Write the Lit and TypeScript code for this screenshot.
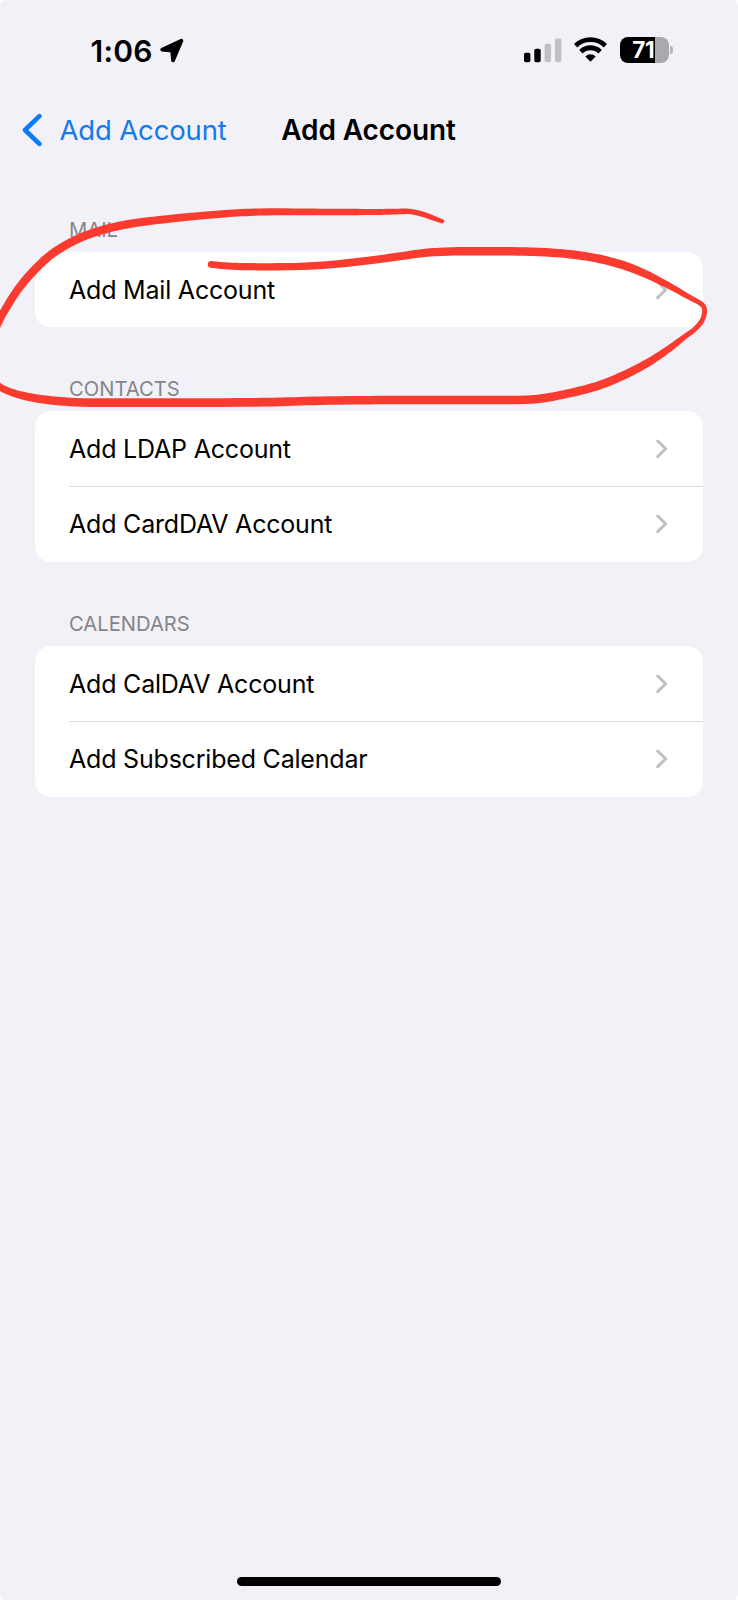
import { LitElement, html, css, svg } from "lit";
import { customElement, property } from "lit/decorators.js";

type InkPoint = [x: number, y: number, width: number];

/** Builds the filled outline of a pen stroke whose width varies along its length. */
function inkOutline(points: InkPoint[]): string {
  const samples: InkPoint[] = [];
  const steps = 8;
  for (let i = 0; i < points.length - 1; i++) {
    const p0 = points[Math.max(0, i - 1)];
    const p1 = points[i];
    const p2 = points[i + 1];
    const p3 = points[Math.min(points.length - 1, i + 2)];
    // Centripetal knots keep unevenly spaced points from looping.
    const knot = (a: InkPoint, b: InkPoint) =>
      Math.max(0.001, Math.sqrt(Math.hypot(b[0] - a[0], b[1] - a[1])));
    const d1 = knot(p0, p1), d2 = knot(p1, p2), d3 = knot(p2, p3);
    const first = i === 0, last = i === points.length - 2;
    for (let s = 0; s < steps; s++) {
      const t = s / steps;
      const at = (k: 0 | 1) => {
        const m1 = first ? p2[k] - p1[k]
          : d2 * ((p1[k] - p0[k]) / d1 - (p2[k] - p0[k]) / (d1 + d2) + (p2[k] - p1[k]) / d2);
        const m2 = last ? p2[k] - p1[k]
          : d2 * ((p2[k] - p1[k]) / d2 - (p3[k] - p1[k]) / (d2 + d3) + (p3[k] - p2[k]) / d3);
        const t2 = t * t, t3 = t2 * t;
        return (2 * t3 - 3 * t2 + 1) * p1[k] + (t3 - 2 * t2 + t) * m1 +
          (-2 * t3 + 3 * t2) * p2[k] + (t3 - t2) * m2;
      };
      samples.push([at(0), at(1), p1[2] + (p2[2] - p1[2]) * t]);
    }
  }
  samples.push(points[points.length - 1]);
  const left: string[] = [];
  const right: string[] = [];
  samples.forEach((p, i) => {
    const a = samples[Math.max(0, i - 1)];
    const b = samples[Math.min(samples.length - 1, i + 1)];
    const len = Math.hypot(b[0] - a[0], b[1] - a[1]) || 1;
    const nx = (-(b[1] - a[1]) / len) * (p[2] / 2);
    const ny = ((b[0] - a[0]) / len) * (p[2] / 2);
    left.push(`${(p[0] + nx).toFixed(2)} ${(p[1] + ny).toFixed(2)}`);
    right.push(`${(p[0] - nx).toFixed(2)} ${(p[1] - ny).toFixed(2)}`);
  });
  const r0 = points[0][2] / 2;
  const r1 = points[points.length - 1][2] / 2;
  return `M${left.join("L")}A${r1} ${r1} 0 0 0 ${right[right.length - 1]}L${right.reverse().join("L")}A${r0} ${r0} 0 0 0 ${left[0]}Z`;
}

const INK: InkPoint[] = [
  [442, 221.3, 4.4], [430, 216.8, 5.2], [419, 213.2, 5.4], [409, 211.4, 5.4], [403, 211.4, 5.6],
  [380, 211.9, 6], [330, 212, 6.6], [260, 212, 7.2], [225, 213.7, 7.4], [200, 215.8, 7.6],
  [165, 219.3, 7.8], [135, 223, 8.2], [110, 228, 8.4], [90, 234, 8.4], [70, 242.8, 8.4],
  [50, 255.5, 8.4], [33, 271.5, 8.4], [19, 288, 8.2], [8.5, 304, 8], [-1, 321, 7.8],
  [-9, 343, 7], [-12, 365, 7], [-8, 380, 7], [0, 387, 7], [12, 392.5, 7.4],
  [28, 396.8, 8], [48, 400, 8.4], [75, 402.2, 8.6], [150, 402.6, 8.7], [265, 402.2, 8.7],
  [320, 400.7, 8.6], [400, 400, 8.5], [500, 400, 8.5], [530, 399.6, 8.5], [545, 398, 8.5],
  [572, 392.6, 8.5], [599, 385.4, 8.5], [623, 375.6, 8.4], [647, 363.2, 8], [668, 349.5, 6.8],
  [684, 337.3, 5.4], [695, 329, 4.9], [702, 320.5, 4.9], [704.6, 312, 4.9], [703.8, 307, 4.9],
  [701, 303.8, 4.9], [690, 297.6, 5.2], [668, 285.2, 6.4], [645, 273.8, 7.8], [625, 265.8, 8.4],
  [600, 259, 8.5], [578, 255.2, 8.5], [555, 252.9, 8.5], [530, 251.7, 8.5], [480, 251.2, 8.5],
  [450, 251.5, 8.4], [424, 253, 8.2], [400, 256.3, 8], [370, 260.3, 7.8], [335, 264.2, 7.6],
  [300, 266.4, 7.4], [245, 266.6, 7.2], [225, 265.8, 7], [211, 264.4, 6.6],
];

@customElement("status-bar")
class StatusBar extends LitElement {
  static styles = css`
    :host { display: flex; justify-content: space-between; height: 90px; box-sizing: border-box; padding: 0 65px 0 90.5px; }
    .clock { display: flex; align-items: flex-start; padding-top: 32px; }
    .time { font-size: 30px; font-weight: 600; line-height: 38px; letter-spacing: 0.2px; width: 68.5px; white-space: nowrap; }
    .arrow { margin-top: 6px; }
    .indicators { display: flex; align-items: flex-start; padding-top: 36.5px; }
    .wifi { margin: 0 13px 0 12px; }
    .battery { display: flex; align-items: center; }
    .cell { display: grid; place-items: center; width: 48.5px; height: 26px; border-radius: 8px; background: linear-gradient(90deg, #000 34.6px, #a9a9ae 34.6px); color: #fff; font-size: 22.5px; font-weight: 700; letter-spacing: -0.5px; line-height: 26px; }
    .level { padding-right: 2px; }
    .nub { width: 3px; height: 8px; margin-left: 1.5px; border-radius: 0 4px 4px 0; background: #b3b3b8; }
  `;
  render() {
    return html`
      <div class="clock">
        <span class="time">1:06</span>
        <svg class="arrow" width="26" height="26" viewBox="0 0 26 26">
          <path d="M22.4 2.7 3.2 11.7 13.2 12.5 14 22.4Z" stroke="#000" stroke-width="3.8" stroke-linejoin="round"/>
        </svg>
      </div>
      <div class="indicators">
        <svg width="38" height="26" viewBox="0 0 38 26">
          <rect x="0" y="15.8" width="6.4" height="9.4" rx="1.8"/>
          <rect x="10.3" y="11.8" width="6.4" height="13.4" rx="1.8"/>
          <rect x="20.6" y="6.8" width="6.4" height="18.4" rx="1.8" fill="#c1c1c5"/>
          <rect x="31" y="1.5" width="6.4" height="23.7" rx="1.8" fill="#c1c1c5"/>
        </svg>
        <svg class="wifi" width="33" height="26" viewBox="0 0 33 26" fill="none" stroke="#000" stroke-width="4.8">
          <path d="M1.6 8.7A21.3 21.3 0 0 1 31.4 8.7"/>
          <path d="M6.9 14.7A13.7 13.7 0 0 1 26.1 14.7"/>
          <path d="M11.3 19.4A7.6 7.6 0 0 1 21.7 19.4L17.3 24Q16.5 24.8 15.7 24Z" fill="#000" stroke="none"/>
        </svg>
        <div class="battery">
          <div class="cell"><span class="level">71</span></div>
          <div class="nub"></div>
        </div>
      </div>`;
  }
}

@customElement("nav-bar")
class NavBar extends LitElement {
  static styles = css`
    :host { display: grid; grid-template-columns: 1fr auto 1fr; align-items: center; height: 80px; padding: 0 23px 0 22px; }
    .back { display: flex; align-items: center; color: #1479ea; }
    .label { margin-left: 17.5px; font-size: 27.5px; line-height: 36px; letter-spacing: -0.15px; white-space: nowrap; }
    .title { font-size: 28px; font-weight: 600; line-height: 36px; letter-spacing: -0.12px; white-space: nowrap; }
  `;
  render() {
    return html`
      <div class="back">
        <svg width="20" height="34" viewBox="0 0 20 34" fill="none" stroke="#0a7aff" stroke-width="4.6" stroke-linecap="round" stroke-linejoin="round">
          <path d="M17.4 3.2 3 17 17.4 30.8"/>
        </svg>
        <span class="label">Add Account</span>
      </div>
      <div class="title">Add Account</div>
      <div></div>`;
  }
}

@customElement("settings-section")
class SettingsSection extends LitElement {
  @property() heading = "";
  @property({ attribute: false }) items: string[] = [];
  static styles = css`
    :host { display: block; }
    .heading { padding-left: 34px; height: 30px; margin-bottom: 8px; font-size: 20.2px; line-height: 31px; color: #85858b; }
    .card { border-radius: 16px; background: #fff; overflow: hidden; }
    .row { display: flex; align-items: center; justify-content: space-between; height: 75.4px; box-sizing: border-box; margin-left: 34px; padding-right: 35px; font-size: 25px; letter-spacing: -0.2px; color: #000; }
    .row + .row { box-shadow: 0 -1px #dcdcdf; }
  `;
  render() {
    return html`
      <div class="heading">${this.heading}</div>
      <div class="card">
        ${this.items.map((item) => html`
          <div class="row">
            <span>${item}</span>
            <svg width="13" height="20" viewBox="0 0 13 20" fill="none" stroke="#c0c0c3" stroke-width="3" stroke-linecap="round" stroke-linejoin="round">
              <path d="M2.7 2 10.7 9.8 2.7 17.6"/>
            </svg>
          </div>`)}
      </div>`;
  }
}

@customElement("app-root")
class AppRoot extends LitElement {
  static styles = css`
    :host { display: block; background: #fff; }
    .screen { position: relative; display: flex; flex-direction: column; width: 738px; height: 1600px; overflow: hidden; border-radius: 6px; background: #f2f1f7; font-family: Inter, "Liberation Sans", sans-serif; color: #000; }
    .sections { display: flex; flex-direction: column; gap: 46px; padding: 44px 35px 0; }
    .home { width: 264px; height: 9px; margin: auto auto 14px 237px; border-radius: 5px; background: #000; }
    .ink { position: absolute; inset: 0; pointer-events: none; }
  `;
  render() {
    return html`
      <div class="screen">
        <status-bar></status-bar>
        <nav-bar></nav-bar>
        <div class="sections">
          <settings-section heading="MAIL" .items=${["Add Mail Account"]}></settings-section>
          <settings-section heading="CONTACTS" .items=${["Add LDAP Account", "Add CardDAV Account"]}></settings-section>
          <settings-section heading="CALENDARS" .items=${["Add CalDAV Account", "Add Subscribed Calendar"]}></settings-section>
        </div>
        <div class="home"></div>
        <svg class="ink" width="738" height="1600" viewBox="0 0 738 1600">
          ${svg`<path d=${inkOutline(INK)} fill="#fb3b30"/>`}
        </svg>
      </div>`;
  }
}
